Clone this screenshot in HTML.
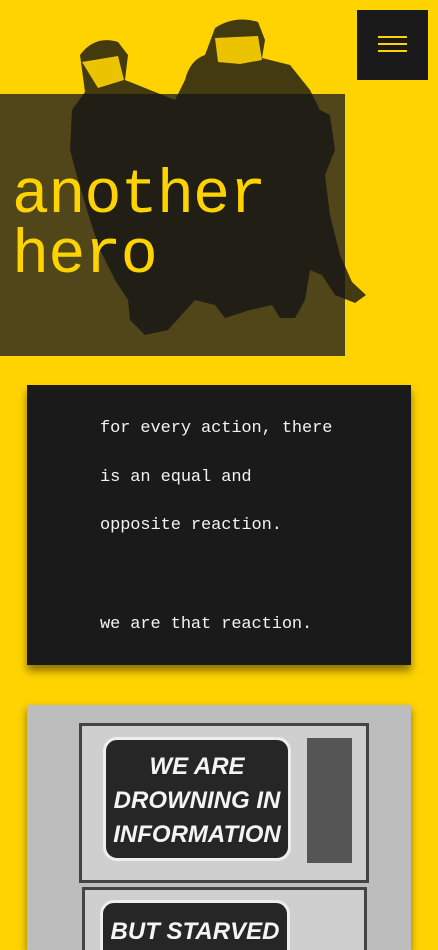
<!DOCTYPE html>
<html><head><meta charset="utf-8"><style>
*{margin:0;padding:0;box-sizing:border-box}
html,body{width:438px;height:950px;overflow:hidden}
body{background:#FFD300;position:relative;font-family:"Liberation Mono",monospace}
.dark{position:absolute;left:0;top:94px;width:345px;height:262px;background:#514619}
svg.fig{position:absolute;left:0;top:0}
.title{position:absolute;left:12px;top:166px;color:#FFD300;font-size:62px;line-height:60px;letter-spacing:-1px}
.menu{position:absolute;left:357px;top:10px;width:71px;height:70px;background:#1a1a1a}
.menu i{position:absolute;left:21px;width:29px;height:2px;background:#FFD300}
.card{position:absolute;left:27px;top:385px;width:384px;height:280px;background:#1a1a1a;box-shadow:0 6px 8px rgba(0,0,0,.45);color:#f2f2f2;font-size:17px;letter-spacing:-0.1px}
.card p{position:absolute;left:73px;white-space:nowrap}
.img{position:absolute;left:27px;top:705px;width:384px;height:245px;background:#bdbdbd;box-shadow:0 4px 8px rgba(0,0,0,.45);overflow:hidden}
.tv{position:absolute;background:#cfcfcf;border:3px solid #444}
.scr{position:absolute;background:#262626;border:3px solid #eee;border-radius:14px;color:#f4f4f4;font-family:"Liberation Sans",sans-serif;font-weight:bold;font-style:italic;text-align:center;font-size:24px;line-height:34px}
</style></head><body>
<div class="dark"></div>
<svg class="fig" width="438" height="370" viewBox="0 0 438 370">
<g fill="#141414" opacity="0.8">
<path d="M80 55 Q95 35 118 42 L128 55 L125 80 L150 90 L175 100 L185 80 Q190 60 205 55 L215 28 Q235 15 258 22 L265 40 L262 58 L290 65 L310 90 L320 110 L330 115 L335 150 L325 175 L330 215 L340 255 L352 282 L366 295 L355 303 L335 295 L322 275 L310 270 L305 300 L295 318 L280 318 L272 305 L250 310 L225 318 L215 305 L195 300 L168 330 L145 335 L130 320 L128 300 L115 280 L100 250 L90 220 L78 180 L70 150 L72 110 L85 92 Z"/>
</g>
<g fill="#FFD300">
<path d="M82 62 L118 56 L124 80 L98 88 Z" opacity=".9"/>
<path d="M215 38 L258 36 L262 60 L240 64 L218 62 Z" opacity=".9"/>
</g>
</svg>
<div class="title">another<br>hero</div>
<div class="menu"><i style="top:26px"></i><i style="top:33px"></i><i style="top:40px"></i></div>
<div class="card">
<p style="top:34px">for every action, there</p>
<p style="top:83px">is an equal and</p>
<p style="top:131px">opposite reaction.</p>
<p style="top:230px">we are that reaction.</p>
</div>
<div class="img">
<div class="tv" style="left:52px;top:18px;width:290px;height:160px"></div>
<div class="scr" style="left:76px;top:32px;width:188px;height:124px;padding-top:10px">WE ARE<br>DROWNING IN<br>INFORMATION</div>
<div style="position:absolute;left:280px;top:33px;width:45px;height:125px;background:#555"></div>
<div class="tv" style="left:55px;top:182px;width:285px;height:80px"></div>
<div class="scr" style="left:73px;top:195px;width:190px;height:70px;padding-top:12px">BUT STARVED</div>
</div>
</body></html>
